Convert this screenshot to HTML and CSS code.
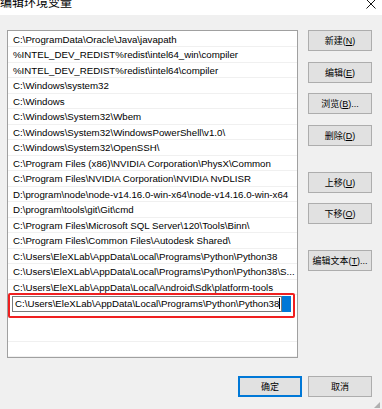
FILE: index.html
```
<!DOCTYPE html>
<html lang="zh-CN">
<head>
    <meta charset="UTF-8">
    <title>编辑环境变量</title>
    <link rel="stylesheet" href="styles.css">
</head>
<body>
    <!-- Barre de titre -->
    <div class="titlebar">
        <span class="title">编辑环境变量</span>
        <span class="close">
            <svg width="10" height="10" viewBox="0 0 10 10"><path d="M0.5 0.5 L9.5 9.5 M9.5 0.5 L0.5 9.5" stroke="#111" stroke-width="1" fill="none"/></svg>
        </span>
    </div>

    <div class="content">
        <div class="path-list">
            <div class="row">C:\ProgramData\Oracle\Java\javapath</div>
            <div class="row">%INTEL_DEV_REDIST%redist\intel64_win\compiler</div>
            <div class="row">%INTEL_DEV_REDIST%redist\intel64\compiler</div>
            <div class="row">C:\Windows\system32</div>
            <div class="row">C:\Windows</div>
            <div class="row">C:\Windows\System32\Wbem</div>
            <div class="row">C:\Windows\System32\WindowsPowerShell\v1.0\</div>
            <div class="row">C:\Windows\System32\OpenSSH\</div>
            <div class="row">C:\Program Files (x86)\NVIDIA Corporation\PhysX\Common</div>
            <div class="row">C:\Program Files\NVIDIA Corporation\NVIDIA NvDLISR</div>
            <div class="row">D:\program\node\node-v14.16.0-win-x64\node-v14.16.0-win-x64</div>
            <div class="row">D:\program\tools\git\Git\cmd</div>
            <div class="row">C:\Program Files\Microsoft SQL Server\120\Tools\Binn\</div>
            <div class="row">C:\Program Files\Common Files\Autodesk Shared\</div>
            <div class="row">C:\Users\EleXLab\AppData\Local\Programs\Python\Python38</div>
            <div class="row">C:\Users\EleXLab\AppData\Local\Programs\Python\Python38\S...</div>
            <div class="row">C:\Users\EleXLab\AppData\Local\Android\Sdk\platform-tools</div>
            <div class="row editing">
                <div class="edit-box">C:\Users\EleXLab\AppData\Local\Programs\Python\Python38<span class="caret"></span></div>
                <div class="sel"></div>
            </div>
            <div class="row"></div>
            <div class="row"></div>
            <div class="row last"></div>
        </div>

        <div class="side-buttons">
            <button>新建(<u>N</u>)</button>
            <button>编辑(<u>E</u>)</button>
            <button>浏览(<u>B</u>)...</button>
            <button>删除(<u>D</u>)</button>
            <button class="spaced">上移(<u>U</u>)</button>
            <button>下移(<u>O</u>)</button>
            <button class="spaced">编辑文本(<u>T</u>)...</button>
        </div>
    </div>

    <div class="footer">
        <button class="primary">确定</button>
        <button>取消</button>
    </div>
    <div class="grip"></div>
</body>
</html>
```

FILE: styles.css
```
body {
    margin: 0;
    width: 382px;
    height: 409px;
    background-color: #f0f0f0;
    font-family: "Liberation Sans", "Noto Sans CJK SC", sans-serif;
    font-size: 9.7px;
    color: #000;
    overflow: hidden;
    position: relative;
}
.titlebar {
    height: 15px;
    background: #fff;
    display: flex;
    justify-content: space-between;
    overflow: hidden;
}
.title {
    font-family: "Noto Sans CJK SC", sans-serif;
    font-size: 12px;
    line-height: 12px;
    margin-top: -4px;
}
.close {
    margin-right: 6px;
    margin-top: -1px;
}
.content {
    display: flex;
    padding: 15px 10px 0 7px;
}
.path-list {
    width: 289px;
    height: 325px;
    background: #fff;
    border: 1px solid #a0a0a0;
    padding-top: 0.5px;
}
.row {
    height: 15.5px;
    line-height: 15px;
    padding-left: 5px;
    border-bottom: 1px solid #f0f0f0;
    box-sizing: border-box;
    white-space: nowrap;
    overflow: hidden;
}
.row.last {
    border-bottom: none;
}
.row.editing {
    position: relative;
    overflow: visible;
    border-bottom: none;
    padding-left: 4px;
    display: flex;
    align-items: flex-start;
    height: 31px;
}
.row.editing::after {
    content: "";
    position: absolute;
    left: 0;
    top: -2px;
    width: 283px;
    height: 21px;
    border: 2px solid #f02020;
    border-radius: 2px;
}
.edit-box {
    flex-shrink: 0;
    margin-top: 1px;
    width: 270px;
    height: 16px;
    line-height: 14px;
    border: 1px solid #7a7a7a;
    padding-left: 2px;
    box-sizing: border-box;
    background: #fff;
    overflow: hidden;
    white-space: nowrap;
}
.caret {
    display: inline-block;
    width: 1px;
    height: 11px;
    background: #000;
    vertical-align: -2px;
}
.sel {
    width: 9px;
    height: 16px;
    margin-top: 1px;
    background: #0078d7;
}
.side-buttons {
    display: flex;
    flex-direction: column;
    gap: 10.5px;
    margin-left: 10px;
}
button {
    width: 64px;
    height: 21px;
    padding: 0;
    background: #e1e1e1;
    border: 1px solid #adadad;
    font-family: "Liberation Sans", "Noto Sans CJK SC", sans-serif;
    font-size: 9px;
    color: #000;
    white-space: nowrap;
}
button u {
    text-underline-offset: 1px;
}
.side-buttons .spaced {
    margin-top: 15.5px;
}
.footer {
    display: flex;
    justify-content: flex-end;
    gap: 6px;
    padding: 18px 10px 0 0;
}
.footer button.primary {
    border: 2px solid #0078d7;
}
.grip {
    position: absolute;
    right: 2px;
    bottom: 1px;
    width: 6px;
    height: 6px;
    background-image: radial-gradient(circle, #b0b0b0 0.8px, transparent 1px);
    background-size: 2px 2px;
    clip-path: polygon(100% 0, 100% 100%, 0 100%);
}
```
